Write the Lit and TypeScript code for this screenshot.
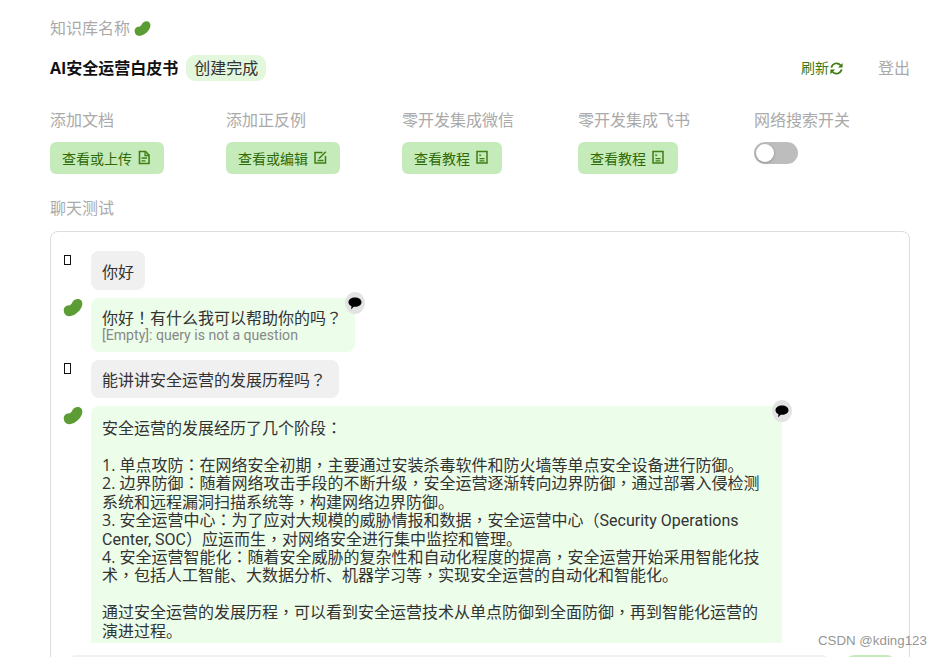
import { LitElement, html, css, svg } from "lit";
import { customElement } from "lit/decorators.js";

const bean = (cls: string) => html`<svg class=${cls} viewBox="0 0 20 19"><path fill="#5b9c34" d="M.8 13C.4 9.500 3 7.500 5.500 7.500 7.500 7.500 8.500 6 9.500 4 11 1.500 14 .3 16.500 1.300 19 2.300 20 5 19 8 18 11 15.500 14 12.500 16 9.500 18 6 18.800 3.500 17.500 2 16.700 1 15 .8 13Z"/></svg>`;

const docIcon = svg`<path fill="none" stroke="#3f7f14" stroke-width="1.600" d="M2.500 1.500h6l3.500 3.500v8.500h-9.500z"/><path fill="none" stroke="#3f7f14" stroke-width="1.300" d="M8 1.500v4h4M4.500 8h5.500M4.500 10.800h4"/>`;
const editIcon = svg`<path fill="none" stroke="#3f7f14" stroke-width="1.500" d="M9.500 2.500h-7.500v10.500h10.500v-7"/><path fill="none" stroke="#3f7f14" stroke-width="1.500" d="M6 8.500l6.800-6.800M4.500 10.500h6"/>`;
const tutorialIcon = svg`<rect x="2" y="1.500" width="10" height="11.500" fill="none" stroke="#3f7f14" stroke-width="1.500"/><path fill="#3f7f14" d="M4.500 3.800l2 1.400-2 1.400z"/><path stroke="#3f7f14" stroke-width="1.200" d="M4.500 8.600h5M4.500 10.900h5"/>`;

const longAnswer = `安全运营的发展经历了几个阶段：

1. 单点攻防：在网络安全初期，主要通过安装杀毒软件和防火墙等单点安全设备进行防御。
2. 边界防御：随着网络攻击手段的不断升级，安全运营逐渐转向边界防御，通过部署入侵检测系统和远程漏洞扫描系统等，构建网络边界防御。
3. 安全运营中心：为了应对大规模的威胁情报和数据，安全运营中心（Security Operations Center, SOC）应运而生，对网络安全进行集中监控和管理。
4. 安全运营智能化：随着安全威胁的复杂性和自动化程度的提高，安全运营开始采用智能化技术，包括人工智能、大数据分析、机器学习等，实现安全运营的自动化和智能化。

通过安全运营的发展历程，可以看到安全运营技术从单点防御到全面防御，再到智能化运营的演进过程。`;

// The reference centres these full-width marks (the TC cut of the CJK font draws them that way)
// and sets its Latin runs in a narrower face than the one around them.
const rich = (text: string) =>
  text.split(/([，！？：（）]|Security Operations|Center, SOC)/).map((part, i) =>
    i % 2
      ? part.length > 1
        ? html`<span class="en">${part}</span>`
        : html`<span class="p" lang="zh-TW">${part}</span>`
      : part
  );

@customElement("app-root")
export class AppRoot extends LitElement {
  static styles = css`
    :host {
      display: block;
      height: 657px;
      overflow: hidden;
      position: relative;
      background: #fff;
      font-family: "Open Sans", "Noto Sans CJK SC", sans-serif;
      color: #333;
      text-spacing-trim: space-all;
    }
    .page { display: flex; flex-direction: column; padding: 17px 31px 0 50px; }
    .p { font-family: "Noto Sans CJK TC", sans-serif; line-height: 0; }
    .en { font-family: Roboto, sans-serif; line-height: 0; }
    .label { font-size: 16px; line-height: 22px; color: #aaa; display: flex; align-items: center; gap: 4px; white-space: nowrap; }
    .bean-s { width: 17px; height: 17px; }
    .head { display: flex; align-items: center; height: 26px; margin-top: 16px; }
    .title { font-size: 16px; font-weight: 700; color: #111; line-height: 22px; }
    .badge { margin-left: 8px; height: 26px; padding: 0 8px; border-radius: 9px; background: #e3f7dc; font-size: 16px; line-height: 26px; color: #333; }
    .spacer { flex: 1; }
    .refresh { display: flex; align-items: center; font-size: 14px; line-height: 20px; color: #3f7a10; }
    .refresh svg { width: 15px; height: 15px; }
    .logout { margin-left: 34px; font-size: 16px; color: #aaa; line-height: 26px; }
    .cols { display: flex; margin-top: 28px; }
    .col { flex: none; width: 176px; display: flex; flex-direction: column; gap: 11px; }
    .btn { align-self: flex-start; box-sizing: border-box; height: 32px; display: flex; align-items: center; gap: 5px; padding: 0 13px 1px 12px; border-radius: 6px; background: #c6ebbb; color: #2f6a06; font-size: 14px; }
    .btn svg { width: 14px; height: 15px; }
    .toggle { width: 44px; height: 22px; border-radius: 11px; background: #bdbdbd; position: relative; }
    .knob { position: absolute; left: 2px; top: 2px; width: 18px; height: 18px; border-radius: 50%; background: #fff; box-shadow: 0 1px 3px rgba(0,0,0,.25); }
    .chat-label { margin-top: 23px; }
    .box { margin-top: 12px; height: 440px; box-sizing: border-box; border: 1px solid #ddd; border-radius: 8px; display: flex; flex-direction: column; }
    .msgs { flex: none; height: 411px; overflow: hidden; padding: 19px 0 0 12px; box-sizing: border-box; display: flex; flex-direction: column; gap: 8px; }
    .row { display: flex; align-items: flex-start; flex: none; }
    .avatar { width: 28px; flex: none; }
    .tofu { display: block; width: 5px; height: 8.500px; border: 1.500px solid #111; margin: 3.500px 0 0 1px; }
    .bean-a { width: 20px; height: 19px; display: block; }
    .bubble { position: relative; box-sizing: border-box; font-size: 16px; line-height: 18.400px; padding: 11px 13px 9px 11px; border-radius: 8px; }
    .user { background: #f0f0f0; }
    .user.first { padding: 12px 11px 9px; }
    .bot { background: #ecfdea; }
    .wide { width: 691px; white-space: pre-wrap; padding: 13px 11px 9px; border-bottom-left-radius: 0; }
    .sub { font-family: Roboto, sans-serif; font-size: 14.100px; line-height: 15px; color: #888; }
    .react { position: absolute; right: -10px; top: -6px; width: 20px; height: 22px; border-radius: 50%; background: #e3e3e3; display: flex; align-items: center; justify-content: center; }
    .react svg { width: 14px; height: 13px; }
    .input-row { display: flex; gap: 16px; margin-top: 12px; padding-left: 17px; }
    .input { width: 762px; height: 40px; border-radius: 8px; background: #f1f1f1; }
    .send { width: 49px; height: 40px; border-radius: 8px; background: #c6ebbb; }
    .mark { position: absolute; left: 818px; top: 632px; font-size: 13.300px; line-height: 18px; font-family: "Liberation Sans", sans-serif; color: rgba(120,120,120,.8); white-space: nowrap; }
  `;

  private react() {
    return html`<span class="react"><svg viewBox="0 0 14 13"><path fill="#000" d="M7 .5c3.600 0 6.500 2 6.500 4.700S10.600 9.800 7 9.800c-.5 0-1 0-1.400-.1L3.200 12.500l.2-3.400C1.600 8.300.5 6.900.5 5.200.5 2.500 3.400.5 7 .5Z"/></svg></span>`;
  }

  render() {
    const cols = [
      ["添加文档", "查看或上传", docIcon],
      ["添加正反例", "查看或编辑", editIcon],
      ["零开发集成微信", "查看教程", tutorialIcon],
      ["零开发集成飞书", "查看教程", tutorialIcon],
    ] as const;
    return html`
      <div class="page" lang="zh-CN">
        <div class="label">知识库名称 ${bean("bean-s")}</div>
        <div class="head">
          <span class="title">AI安全运营白皮书</span>
          <span class="badge">创建完成</span>
          <span class="spacer"></span>
          <span class="refresh">刷新<svg viewBox="0 0 16 16"><path fill="none" stroke="#3f7a10" stroke-width="1.800" d="M2.500 7a5.600 5.600 0 0 1 9.800-2.500M13.500 9a5.600 5.600 0 0 1-9.800 2.500"/><path fill="#3f7a10" d="M14.500 2v5h-5zM1.500 14V9h5z"/></svg></span>
          <span class="logout">登出</span>
        </div>
        <div class="cols">
          ${cols.map(([l, b, i]) => html`<div class="col"><div class="label">${l}</div><div class="btn">${b}<svg viewBox="0 0 14 15">${i}</svg></div></div>`)}
          <div class="col"><div class="label">网络搜索开关</div><div class="toggle"><span class="knob"></span></div></div>
        </div>
        <div class="label chat-label">聊天测试</div>
        <div class="box">
          <div class="msgs">
            <div class="row"><div class="avatar"><span class="tofu"></span></div><div class="bubble user first">你好</div></div>
            <div class="row"><div class="avatar">${bean("bean-a")}</div><div class="bubble bot">${rich("你好！有什么我可以帮助你的吗？")}<div class="sub">[Empty]: query is not a question</div>${this.react()}</div></div>
            <div class="row"><div class="avatar"><span class="tofu"></span></div><div class="bubble user">${rich("能讲讲安全运营的发展历程吗？")}</div></div>
            <div class="row"><div class="avatar">${bean("bean-a")}</div><div class="bubble bot wide">${rich(longAnswer)}${this.react()}</div></div>
          </div>
          <div class="input-row"><div class="input"></div><div class="send"></div></div>
        </div>
      </div>
      <div class="mark">CSDN @kding123</div>
    `;
  }
}
